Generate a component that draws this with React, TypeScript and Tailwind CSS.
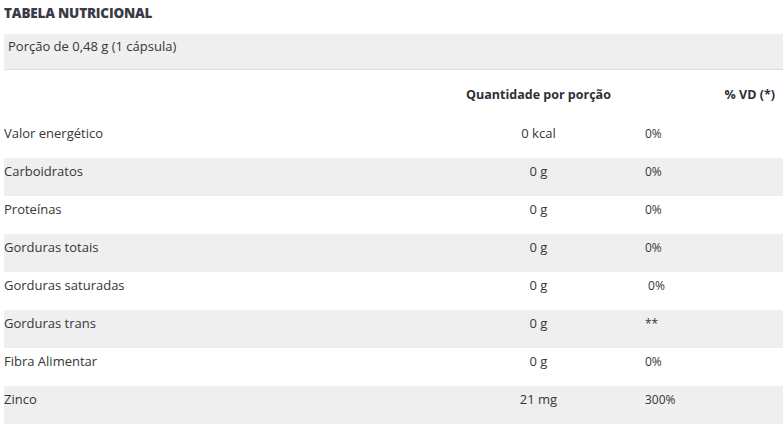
export default function App() {
  const rows = [
    { label: "Valor energético", qty: "0 kcal", vd: "0%" },
    { label: "Carboidratos", qty: "0 g", vd: "0%" },
    { label: "Proteínas", qty: "0 g", vd: "0%" },
    { label: "Gorduras totais", qty: "0 g", vd: "0%" },
    { label: "Gorduras saturadas", qty: "0 g", vd: "\u00a00%" },
    { label: "Gorduras trans", qty: "0 g", vd: "**" },
    { label: "Fibra Alimentar", qty: "0 g", vd: "0%" },
    { label: "Zinco", qty: "21 mg", vd: "300%" },
  ];

  return (
    <div className="w-[783px] h-[426px] overflow-hidden bg-white text-[#363636] font-['Open_Sans',sans-serif]">
      <h1 className="px-1 pt-[3px] h-[34px] text-[13.5px] font-extrabold text-[#3b3b47] tracking-[-0.2px]">
        TABELA NUTRICIONAL
      </h1>

      {/* Porção */}
      <div className="ml-1 h-[36px] bg-[#efefef] border-b border-[#dedede] pl-[4px] pt-[3px] text-[13px]">
        Porção de 0,48 g (1 cápsula)
      </div>

      {/* Header */}
      <div className="grid grid-cols-[463px_143px_1fr] ml-1 h-[50px] items-center whitespace-nowrap text-[12.5px] font-bold text-[#2e2e38]">
        <div />
        <div className="flex justify-center">Quantidade por porção</div>
        <div className="text-right pr-[8px]">% VD (*)</div>
      </div>

      {/* Rows */}
      {rows.map((r, i) => (
        <div
          key={r.label}
          className={`grid grid-cols-[463px_143px_1fr] ml-1 h-[38px] pt-[4px] text-[13px] ${i % 2 === 1 ? "bg-[#efefef]" : "bg-white"}`}
        >
          <div>{r.label}</div>
          <div className="text-center">{r.qty}</div>
          <div className="pl-[35px] pt-[1px] text-[12px]">{r.vd}</div>
        </div>
      ))}
    </div>
  );
}
